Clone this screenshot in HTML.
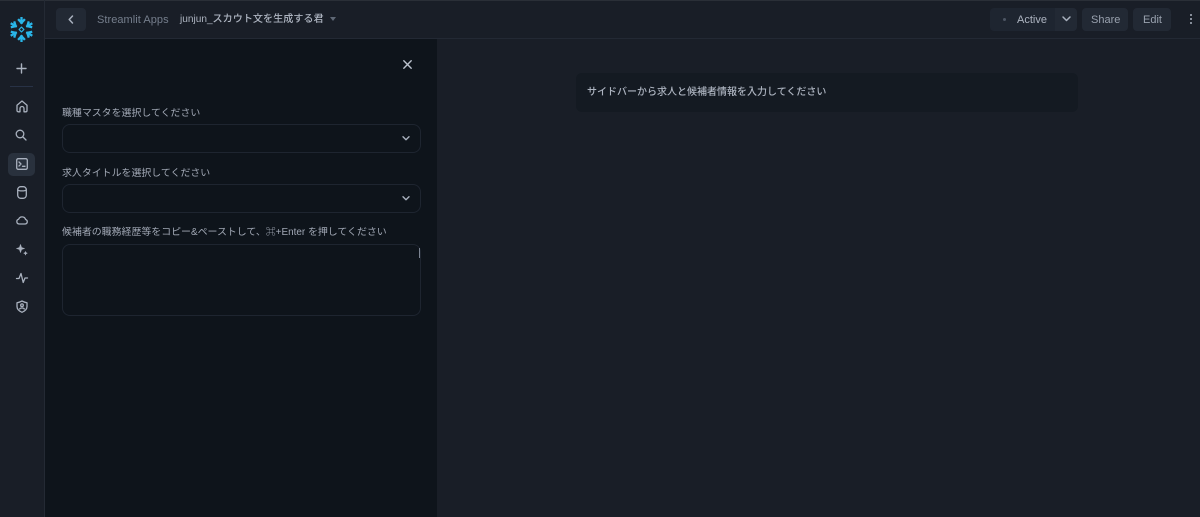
<!DOCTYPE html>
<html lang="ja">
<head>
<meta charset="utf-8">
<style>
html,body{margin:0;padding:0;width:1200px;height:517px;overflow:hidden;background:#191e27;}
body{position:relative;font-family:"Liberation Sans","Noto Sans CJK JP",sans-serif;color:#b9c0cc;}
.a{position:absolute;}
.t{position:absolute;white-space:nowrap;line-height:14px;}
.btn{position:absolute;box-sizing:border-box;background:#222934;border:1px solid #222934;border-radius:4px;}
.field{position:absolute;left:62px;width:359px;box-sizing:border-box;background:#0e141b;border:1px solid #1e2530;border-radius:8px;}
svg{position:absolute;overflow:visible;fill:none;stroke:#a9b1be;stroke-width:1.3;stroke-linecap:round;stroke-linejoin:round;}
</style>
</head>
<body>
<div class="a" style="left:0;top:0;width:1200px;height:1px;background:#2a2f37"></div>
<div class="a" style="left:44px;top:0;width:1px;height:517px;background:#242a34"></div>
<div class="a" style="left:45px;top:38px;width:1155px;height:1px;background:#232934"></div>
<div class="a" style="left:45px;top:39px;width:392px;height:478px;background:#0e141b"></div>

<!-- logo -->
<svg style="left:9px;top:17px" width="25" height="25" viewBox="-12.500 -12.500 25 25">
<g stroke="#29b5e8" stroke-width="2.300" stroke-linecap="butt" stroke-linejoin="miter">
<path d="M0-5.500V-12.500M-3.400-10.400L0-6.700 3.400-10.400"/>
<g transform="rotate(60)"><path d="M0-5.500V-12.500M-3.400-10.400L0-6.700 3.400-10.400"/></g>
<g transform="rotate(120)"><path d="M0-5.500V-12.500M-3.400-10.400L0-6.700 3.400-10.400"/></g>
<g transform="rotate(180)"><path d="M0-5.500V-12.500M-3.400-10.400L0-6.700 3.400-10.400"/></g>
<g transform="rotate(240)"><path d="M0-5.500V-12.500M-3.400-10.400L0-6.700 3.400-10.400"/></g>
<g transform="rotate(300)"><path d="M0-5.500V-12.500M-3.400-10.400L0-6.700 3.400-10.400"/></g>
</g>
<path d="M0-2.400L2.400 0 0 2.400-2.400 0z" stroke="#29b5e8" stroke-width="1.200"/>
</svg>

<!-- plus -->
<svg style="left:16px;top:63px" width="11" height="11"><path d="M5.500 1v9M1 5.500h9" stroke-width="1.400"/></svg>
<div class="a" style="left:10px;top:86px;width:23px;height:1px;background:#283246"></div>

<!-- home -->
<svg style="left:15.500px;top:100px" width="12" height="13" viewBox="0 0 12 13"><path d="M1 5.200L6 1l5 4.200v5.300c0 .8-.5 1.300-1.300 1.300H8V8.500a2 2 0 0 0-4 0v3.300H2.300C1.500 11.800 1 11.300 1 10.500z"/></svg>
<!-- search -->
<svg style="left:15px;top:129px" width="12" height="12" viewBox="0 0 12 12"><circle cx="5" cy="5" r="3.800"/><path d="M8 8l3 3"/></svg>
<!-- terminal active -->
<div class="a" style="left:8px;top:153px;width:27px;height:23px;border-radius:5px;background:#29313d"></div>
<svg style="left:15.500px;top:158px" width="12" height="12" viewBox="0 0 12 12"><rect x=".7" y=".7" width="10.600" height="10.600" rx="1.500"/><path d="M3 4l2 2-2 2M6.500 8.300h2.500"/></svg>
<!-- database -->
<svg style="left:16.500px;top:186px" width="10" height="13" viewBox="0 0 10 13"><rect x=".7" y=".7" width="8.600" height="11.600" rx="3"/><path d="M.7 4c1.500 1.200 7.100 1.200 8.600 0"/></svg>
<!-- cloud -->
<svg style="left:15.500px;top:215px" width="12" height="10" viewBox="0 0 12 10"><path d="M3 9h6.200A2.300 2.300 0 0 0 9.600 4.500 3.700 3.700 0 0 0 2.600 4.300 2.400 2.400 0 0 0 3 9z"/></svg>
<!-- sparkle -->
<svg style="left:16px;top:244px" width="12" height="12" viewBox="0 0 12 12"><path d="M4.500 .5l1 3 3 1-3 1-1 3-1-3-3-1 3-1z" fill="#a9b1be" stroke-width=".6"/><path d="M9.500 7.500l.5 1.200 1.200.5-1.200.5-.5 1.300-.5-1.300-1.200-.5 1.200-.5z" fill="#a9b1be" stroke-width=".6"/></svg>
<!-- activity -->
<svg style="left:15.500px;top:272px" width="12" height="12" viewBox="0 0 12 12"><path d="M.5 6.500H3L5 1.500l2.200 9L9 6h2.500"/></svg>
<!-- shield -->
<svg style="left:15.500px;top:300px" width="12" height="13" viewBox="0 0 12 13"><path d="M1 2.800Q3.500 2.300 6 1q2.500 1.300 5 1.800v3.700c0 2.800-2.500 4.800-5 5.800-2.500-1-5-3-5-5.800z"/><circle cx="6" cy="5.200" r="1.300"/><path d="M3.700 9c.5-1.300 4.100-1.300 4.600 0"/></svg>

<!-- header -->
<div class="btn" style="left:56px;top:8px;width:30px;height:23px;background:#222934"></div>
<svg style="left:68px;top:15px" width="6" height="9" viewBox="0 0 6 9"><path d="M4.500 1L1.200 4.500l3.300 3.500" stroke-width="1.500"/></svg>
<div class="t" style="left:97px;top:13px;font-size:11px;color:#757e8c;letter-spacing:.05px">Streamlit Apps</div>
<div class="t" style="left:180px;top:13px;font-size:10.100px;color:#adb4c0;font-weight:500">junjun_スカウト文を生成する君</div>
<div class="a" style="left:330px;top:17px;width:0;height:0;border-left:3px solid transparent;border-right:3px solid transparent;border-top:4px solid #5f6876"></div>

<div class="btn" style="left:990px;top:8px;width:65px;height:23px;border-radius:4px 0 0 4px;background:#1e2530;border-color:#1e2530"></div>
<div class="a" style="left:1003px;top:18px;width:3px;height:3px;border-radius:50%;background:#4c5563"></div>
<div class="t" style="left:1017px;top:13px;font-size:11px;color:#adb4c0">Active</div>
<div class="btn" style="left:1055px;top:8px;width:22px;height:23px;border-radius:0 4px 4px 0;background:#222934"></div>
<svg style="left:1062px;top:16px" width="9" height="6" viewBox="0 0 9 6"><path d="M1 1l3.500 3.500L8 1" stroke-width="1.500"/></svg>
<div class="btn" style="left:1082px;top:8px;width:46px;height:23px"></div>
<div class="t" style="left:1091px;top:13px;font-size:11px;color:#99a1ae">Share</div>
<div class="btn" style="left:1133px;top:8px;width:38px;height:23px"></div>
<div class="t" style="left:1143px;top:13px;font-size:11px;color:#99a1ae">Edit</div>
<div class="a" style="left:1190px;top:14px;width:2px;height:2px;background:#a9b1be;border-radius:50%;box-shadow:0 4px 0 #a9b1be,0 8px 0 #a9b1be"></div>

<!-- sidebar panel -->
<svg style="left:403px;top:60px" width="9" height="9" viewBox="0 0 9 9"><path d="M.8.8l7.400 7.400M8.200.8L.8 8.200" stroke="#bcc3ce" stroke-width="1.400"/></svg>

<div class="t" style="left:62px;top:107px;font-size:9.930px;color:#a1a8b5">職種マスタを選択してください</div>
<div class="field" style="top:124px;height:29px"></div>
<svg style="left:401.500px;top:136px" width="8" height="5" viewBox="0 0 8 5"><path d="M1 .800L4 3.800l3-3" stroke-width="1.400"/></svg>

<div class="t" style="left:62px;top:167px;font-size:9.930px;color:#a1a8b5">求人タイトルを選択してください</div>
<div class="field" style="top:184px;height:29px"></div>
<svg style="left:401.500px;top:196px" width="8" height="5" viewBox="0 0 8 5"><path d="M1 .800L4 3.800l3-3" stroke-width="1.400"/></svg>

<div class="t" style="left:62px;top:226px;font-size:9.930px;color:#a1a8b5">候補者の職務経歴等をコピー&amp;ペーストして、⌘+Enter を押してください</div>
<div class="field" style="top:244px;height:72px"></div>
<div class="a" style="left:419px;top:248px;width:1px;height:10px;background:#7c8492"></div>

<!-- main notice -->
<div class="a" style="left:576px;top:73px;width:502px;height:39px;background:#141a22;border-radius:6px"></div>
<div class="t" style="left:587px;top:86px;font-size:10px;color:#adb4c0;font-weight:500">サイドバーから求人と候補者情報を入力してください</div>
</body>
</html>
